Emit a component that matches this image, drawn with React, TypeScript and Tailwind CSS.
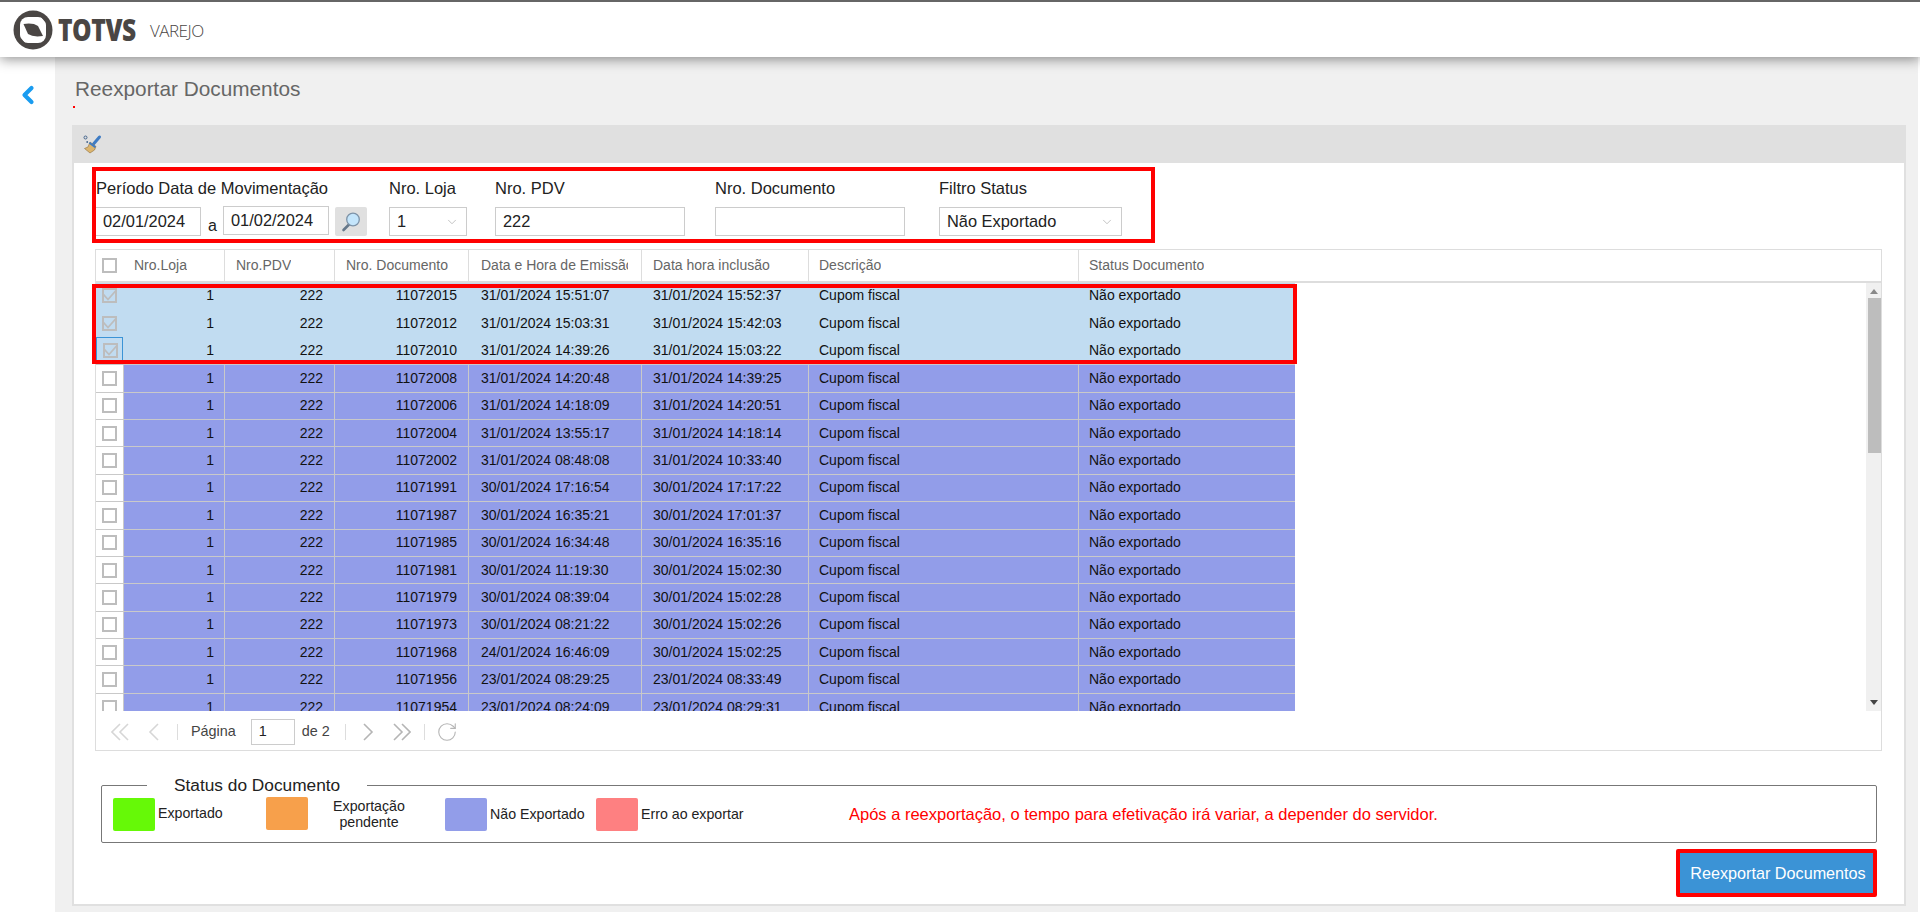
import React from "react";
import { ChevronDown, ChevronLeft, RotateCw } from "lucide-react";

const rows = [
  ["11072015", "31/01/2024 15:51:07", "31/01/2024 15:52:37"],
  ["11072012", "31/01/2024 15:03:31", "31/01/2024 15:42:03"],
  ["11072010", "31/01/2024 14:39:26", "31/01/2024 15:03:22"],
  ["11072008", "31/01/2024 14:20:48", "31/01/2024 14:39:25"],
  ["11072006", "31/01/2024 14:18:09", "31/01/2024 14:20:51"],
  ["11072004", "31/01/2024 13:55:17", "31/01/2024 14:18:14"],
  ["11072002", "31/01/2024 08:48:08", "31/01/2024 10:33:40"],
  ["11071991", "30/01/2024 17:16:54", "30/01/2024 17:17:22"],
  ["11071987", "30/01/2024 16:35:21", "30/01/2024 17:01:37"],
  ["11071985", "30/01/2024 16:34:48", "30/01/2024 16:35:16"],
  ["11071981", "30/01/2024 11:19:30", "30/01/2024 15:02:30"],
  ["11071979", "30/01/2024 08:39:04", "30/01/2024 15:02:28"],
  ["11071973", "30/01/2024 08:21:22", "30/01/2024 15:02:26"],
  ["11071968", "24/01/2024 16:46:09", "30/01/2024 15:02:25"],
  ["11071956", "23/01/2024 08:29:25", "23/01/2024 08:33:49"],
  ["11071954", "23/01/2024 08:24:09", "23/01/2024 08:29:31"],
];

const columns = "grid-cols-[27px_101px_110px_134px_173px_167px_270px_217px]";

const headers = [
  { title: "Nro.Loja", className: "pl-[11px]" },
  { title: "Nro.PDV", className: "border-l border-[#ddd] pl-[11px]" },
  { title: "Nro. Documento", className: "border-l border-[#ddd] pl-[11px]" },
  { title: "Data e Hora de Emissão", className: "border-l border-[#ddd] pl-[12px]" },
  { title: "Data hora inclusão", className: "border-l border-[#ddd] pl-[11px]" },
  { title: "Descrição", className: "border-l border-[#ddd] pl-[10px]" },
  { title: "Status Documento", className: "border-l border-[#ddd] pl-[10px]" },
];

const Logo = () => (
  <svg width="40" height="40" viewBox="0 0 40 40">
    <circle cx="20" cy="20" r="19.5" fill="#4a4644" />
    <rect x="7" y="7" width="26" height="26" rx="8" fill="#fff" />
    <path d="M10.5 14 Q20 12.5 25 16 L30 26 Q20 27.5 15 24 Z" fill="#4a4644" />
    <path d="M28 7 L33 7 L33 13 Z" fill="#4a4644" />
    <path d="M12 33 L7 33 L7 27 Z" fill="#4a4644" />
  </svg>
);

const Broom = () => (
  <svg width="19" height="20" viewBox="0 0 19 20">
    <path d="M10.5 10 L16.5 3" stroke="#3f7cc4" strokeWidth="3" strokeLinecap="round" />
    <path d="M7 8 L13 12.5 L11.5 16 L7 19 L1.5 14.5 L5 13 Z" fill="#dcb56e" stroke="#8f6f3a" strokeWidth="0.6" />
    <path d="M7 8 L13 12.5 L11.7 14 L5.8 9.4 Z" fill="#3f7cc4" />
    <circle cx="2.5" cy="3.5" r="1.5" fill="none" stroke="#44658c" strokeWidth="1" />
    <circle cx="4.2" cy="8" r="0.9" fill="#44658c" />
  </svg>
);

const Lens = () => (
  <svg width="20" height="20" viewBox="0 0 20 20">
    <path d="M8 12.5 L2.5 18" stroke="#66788a" strokeWidth="2.6" strokeLinecap="round" />
    <circle cx="12" cy="7.5" r="6.3" fill="#c4e5fb" stroke="#7d93a8" strokeWidth="1.3" />
  </svg>
);

const Check = ({ checked }: { checked: boolean }) => (
  <span className="flex h-[15px] w-[15px] items-center justify-center border-2 border-[#bdbdbd] bg-transparent">
    {checked && (
      <svg width="13" height="11" viewBox="0 0 13 11" className="shrink-0">
        <path d="M0.5 4.5 L5 9.5 L12.5 1" fill="none" stroke="#bdbdbd" strokeWidth="1.8" />
      </svg>
    )}
  </span>
);

const PagerChevrons = ({ points, width, color }: { points: string[]; width: number; color: string }) => (
  <svg width={width} height="18" viewBox={`0 0 ${width} 18`} className="shrink-0">
    {points.map((p) => (
      <polyline key={p} points={p} fill="none" stroke={color} strokeWidth="1.6" />
    ))}
  </svg>
);

const Field = ({ label, className, children }: { label: string; className: string; children: React.ReactNode }) => (
  <div className={className}>
    <div className="h-[37px] pt-[7px] text-[16.5px] leading-[22px] text-[#222]">{label}</div>
    {children}
  </div>
);

const TextBox = ({ value, className }: { value: string; className: string }) => (
  <div className={`flex h-[29px] items-center border border-[#ccc] bg-white px-[7px] text-[16.4px] text-[#222] ${className}`}>{value}</div>
);

const SelectBox = ({ value, className }: { value: string; className: string }) => (
  <div className={`flex h-[29px] items-center justify-between border border-[#ccc] bg-white pl-[7px] pr-[7px] text-[16.4px] text-[#222] ${className}`}>
    {value}
    <ChevronDown size={14} strokeWidth={1.2} color="#aaa" />
  </div>
);

const Swatch = ({ color, className = "" }: { color: string; className?: string }) => (
  <span className={`h-[33px] w-[42px] shrink-0 rounded-[2px] ${color} ${className}`} />
);

export default function App() {
  return (
    <div className="flex h-[912px] w-[1920px] flex-col overflow-hidden bg-[#f0f0f0] font-['Liberation_Sans',Arial,sans-serif]">
      <header className="relative z-10 flex h-[57px] shrink-0 items-center border-t-2 border-[#666] bg-white pl-[13px] shadow-[0_2px_12px_rgba(0,0,0,0.45)]">
        <Logo />
        <span className="ml-[5px] inline-block w-[84px] origin-left scale-x-[0.82] font-['Open_Sans',sans-serif] text-[30px] font-extrabold tracking-[-0.5px] text-[#4a4644]">TOTVS</span>
        <span className="ml-[8px] mt-[2px] font-['Open_Sans',sans-serif] text-[17px] font-light tracking-[-0.5px] text-[#4a4644]">VAREJO</span>
      </header>

      <div className="flex min-h-0 flex-1">
        <aside className="w-[55px] shrink-0 bg-white pl-[14px] pt-[24px]">
          <ChevronLeft size={28} strokeWidth={3.6} color="#1a9cf0" />
        </aside>

        <main className="min-w-0 flex-1 pl-[17px] pr-[12px]">
          <h1 className="ml-[3px] pt-[20px] text-[20.8px] leading-[24px] text-[#666]">Reexportar Documentos</h1>
          <div className="ml-[1px] mt-[5px] h-[2px] w-[2px] bg-[#f00]" />

          <section className="mt-[17px] h-[781px] border-b-2 border-l-2 border-r-2 border-[#e0e0e0] bg-white">
            <div className="flex h-[38px] items-center bg-[#e0e0e0] pl-[9px]">
              <Broom />
            </div>

            <div className="pl-[18px]">
              <div className="mt-[4px] flex h-[76px] w-[1063px] border-4 border-[#f00]">
                <Field label="Período Data de Movimentação" className="w-[293px] -mt-[1px]">
                  <div className="flex items-start">
                    <TextBox value="02/01/2024" className="w-[105px] border-l-0" />
                    <span className="ml-[7px] mt-[7px] w-[15px] text-[16px] text-[#222]">a</span>
                    <TextBox value="01/02/2024" className="-mt-[1px] w-[106px]" />
                    <button className="ml-[6px] flex h-[29px] w-[32px] items-center justify-center rounded-[2px] bg-[#e0e0e0]">
                      <Lens />
                    </button>
                  </div>
                </Field>
                <Field label="Nro. Loja" className="w-[106px] -mt-[1px]">
                  <SelectBox value="1" className="w-[78px]" />
                </Field>
                <Field label="Nro. PDV" className="w-[220px] -mt-[1px]">
                  <TextBox value="222" className="w-[190px]" />
                </Field>
                <Field label="Nro. Documento" className="w-[224px] -mt-[1px]">
                  <TextBox value="" className="w-[190px]" />
                </Field>
                <Field label="Filtro Status" className="w-[183px] -mt-[1px]">
                  <SelectBox value="Não Exportado" className="w-[183px]" />
                </Field>
              </div>

              <div className="ml-[3px] mt-[6px] h-[502px] w-[1787px] border border-[#ddd]">
                <div className={`grid h-[33px] ${columns} border-b-2 border-[#ddd] text-[14px] text-[#666]`}>
                  <div className="flex items-center pl-[6px]">
                    <Check checked={false} />
                  </div>
                  {headers.map(({ title, className }) => (
                    <div key={title} className={`flex items-center pr-[13px] ${className}`}>
                      <span className="overflow-hidden whitespace-nowrap">{title}</span>
                    </div>
                  ))}
                </div>

                <div className="relative h-[428px]">
                  <div className="h-full overflow-hidden">
                    <div className="-mt-[1px]">
                      {rows.map(([doc, emitted, included], index) => {
                        const selected = index < 3;
                        const cell = selected ? "border-l border-transparent" : "border-l border-[#c9c9c9] bg-[#929de9]";
                        return (
                          <div key={doc} className={`grid h-[27.4px] w-[1199px] ${columns} text-[14px] text-[#111] ${selected ? "bg-[#c1dcf1]" : "border-t border-[#c9c9c9]"}`}>
                            <div className={`flex items-center pl-[6px] ${!selected ? "bg-white" : ""} ${index === 2 ? "border border-[#3b93d6] pl-[5px]" : ""}`}>
                              <Check checked={selected} />
                            </div>
                            <div className={`flex items-center justify-end pr-[10px] ${cell}`}>1</div>
                            <div className={`flex items-center justify-end pr-[11px] ${cell}`}>222</div>
                            <div className={`flex items-center justify-end pr-[11px] ${cell}`}>{doc}</div>
                            <div className={`flex items-center whitespace-nowrap pl-[12px] ${cell}`}>{emitted}</div>
                            <div className={`flex items-center whitespace-nowrap pl-[11px] ${cell}`}>{included}</div>
                            <div className={`flex items-center pl-[10px] ${cell}`}>Cupom fiscal</div>
                            <div className={`flex items-center pl-[10px] ${cell}`}>Não exportado</div>
                          </div>
                        );
                      })}
                    </div>
                  </div>

                  <div className="absolute left-[-4px] top-[1px] h-[80px] w-[1205px] border-4 border-[#f00]" />

                  <div className="absolute bottom-0 right-0 top-0 w-[15px] bg-[#f0f0f0]">
                    <span className="absolute left-[4px] top-[6px] h-0 w-0 border-x-[4px] border-b-[5px] border-x-transparent border-b-[#888]" />
                    <span className="absolute left-[2px] top-[15px] h-[155px] w-[13px] bg-[#bdbdbd]" />
                    <span className="absolute bottom-[6px] left-[4px] h-0 w-0 border-x-[4px] border-t-[5px] border-x-transparent border-t-[#444]" />
                  </div>
                </div>

                <div className="flex h-[39px] items-center pl-[15px] pt-[2px] text-[14.4px] text-[#444]">
                  <PagerChevrons width={18} color="#d6d6d6" points={["9,1 1,9 9,17", "17,1 9,9 17,17"]} />
                  <span className="ml-[19px]">
                    <PagerChevrons width={12} color="#d6d6d6" points={["10,1 2,9 10,17"]} />
                  </span>
                  <span className="ml-[17px] h-[16px] w-px bg-[#ddd]" />
                  <span className="ml-[13px]">Página</span>
                  <span className="ml-[15px] flex h-[26px] w-[44px] items-center border border-[#ccc] pl-[7px] text-[#222]">1</span>
                  <span className="ml-[7px]">de 2</span>
                  <span className="ml-[15px] h-[16px] w-px bg-[#ddd]" />
                  <span className="ml-[16px]">
                    <PagerChevrons width={12} color="#b5b5b5" points={["2,1 10,9 2,17"]} />
                  </span>
                  <span className="ml-[19px]">
                    <PagerChevrons width={18} color="#b5b5b5" points={["1,1 9,9 1,17", "9,1 17,9 9,17"]} />
                  </span>
                  <span className="ml-[13px] h-[16px] w-px bg-[#ddd]" />
                  <RotateCw size={22} strokeWidth={1.2} color="#b5b5b5" className="ml-[11px]" />
                </div>
              </div>

              <fieldset className="ml-[9px] mt-[25px] h-[67px] w-[1776px] rounded-[2px] border border-[#777]">
                <legend className="ml-[45px] px-[27px] text-[17.3px] leading-[18px] text-[#222]">Status do Documento</legend>
                <div className="flex h-[39px] items-center pl-[11px] pt-[1px] text-[14.2px] text-[#222]">
                  <Swatch color="bg-[#66f907]" />
                  <span className="ml-[3px] w-[108px]">Exportado</span>
                  <Swatch color="bg-[#f7a04b]" className="-mt-[1px]" />
                  <span className="mr-[15px] w-[122px] text-center leading-[16px]">Exportação pendente</span>
                  <Swatch color="bg-[#929de9]" />
                  <span className="ml-[3px] mt-[2px] w-[106px]">Não Exportado</span>
                  <Swatch color="bg-[#fe8081]" />
                  <span className="ml-[3px] mt-[2px] w-[208px]">Erro ao exportar</span>
                  <span className="text-[16.5px] text-[#f00]">Após a reexportação, o tempo para efetivação irá variar, a depender do servidor.</span>
                </div>
              </fieldset>

              <div className="mt-[6px] flex justify-end pr-[27px]">
                <button className="h-[48px] w-[201px] rounded-[2px] border-4 border-[#f00] bg-[#3b93d6] pl-[3px] text-[16.2px] text-white">Reexportar Documentos</button>
              </div>
            </div>
          </section>
        </main>

        <div className="w-[2px] shrink-0 bg-white" />
      </div>
    </div>
  );
}
